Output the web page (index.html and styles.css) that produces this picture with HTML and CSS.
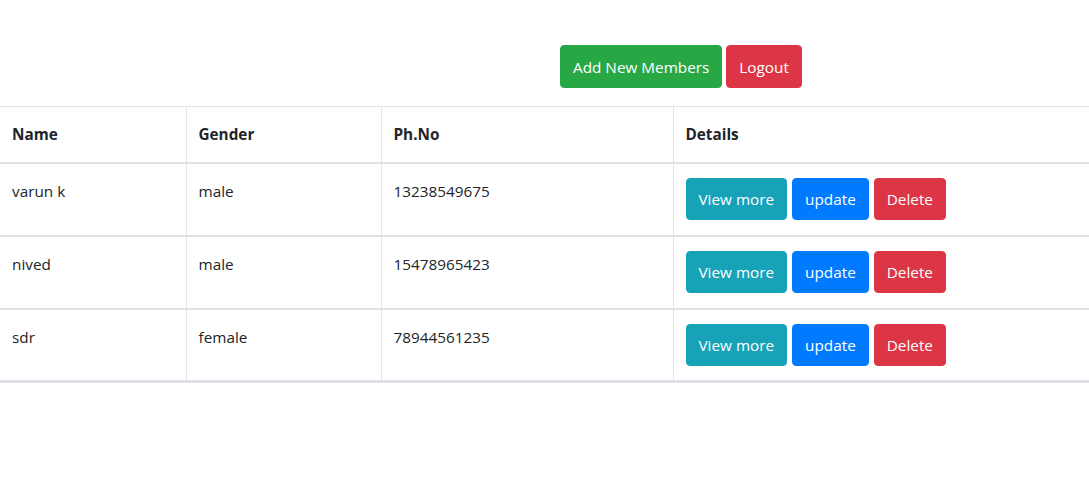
FILE: index.html
```html
<!DOCTYPE html>
<html>
<head>
<meta charset="utf-8">
<link rel="stylesheet" href="styles.css">
</head>
<body>
<div class="page">
  <div class="topbar">
    <button class="btn btn-success">Add New Members</button>
    <button class="btn btn-danger">Logout</button>
  </div>
  <table class="members">
    <thead>
      <tr>
        <th class="c-name">Name</th>
        <th class="c-gender">Gender</th>
        <th class="c-phone">Ph.No</th>
        <th class="c-details">Details</th>
      </tr>
    </thead>
    <tbody>
      <tr>
        <td>varun k</td>
        <td>male</td>
        <td>13238549675</td>
        <td><div class="actions"><button class="btn btn-info">View more</button><button class="btn btn-primary">update</button><button class="btn btn-danger">Delete</button></div></td>
      </tr>
      <tr>
        <td>nived</td>
        <td>male</td>
        <td>15478965423</td>
        <td><div class="actions"><button class="btn btn-info">View more</button><button class="btn btn-primary">update</button><button class="btn btn-danger">Delete</button></div></td>
      </tr>
      <tr>
        <td>sdr</td>
        <td>female</td>
        <td>78944561235</td>
        <td><div class="actions"><button class="btn btn-info">View more</button><button class="btn btn-primary">update</button><button class="btn btn-danger">Delete</button></div></td>
      </tr>
    </tbody>
  </table>
</div>
</body>
</html>
```
FILE: styles.css
```css
* { box-sizing: border-box; }
html, body { margin: 0; padding: 0; background: #fff; }
body {
  font-family: "Open Sans", "Noto Sans", sans-serif;
  font-size: 15.3px;
  line-height: 1.5;
  color: #212529;
}
.page { padding-top: 45px; }
.topbar {
  display: flex;
  gap: 4px;
  padding-left: 560px;
  margin-bottom: 18px;
}
.btn {
  display: inline-flex;
  align-items: center;
  justify-content: center;
  height: 43px;
  padding: 0 12px;
  border: 1px solid transparent;
  border-radius: 4px;
  font-family: inherit;
  font-size: 15.3px;
  color: #fff;
  cursor: pointer;
}
.btn-success { background: #28a745; border-color: #28a745; }
.btn-danger { background: #dc3545; border-color: #dc3545; }
.btn-info { background: #17a2b8; border-color: #17a2b8; }
.btn-primary { background: #007bff; border-color: #007bff; }

.members {
  width: 100%;
  border-collapse: collapse;
}
.members th, .members td {
  text-align: left;
  vertical-align: top;
  padding: 16px 12px 12px;
  border-left: 1px solid #e3e4e8;
}
.members th:first-child, .members td:first-child { border-left: none; }
.members th {
  font-weight: 700;
  border-top: 1px solid #e3e4e8;
  border-bottom: 2px solid #dee2e6;
  height: 56px;
}
.members td {
  border-bottom: 2px solid #dee2e6;
  height: 73px;
}
.members tbody tr:last-child td { border-bottom-width: 3px; }
.c-name { width: 186px; }
.c-gender { width: 195px; }
.c-phone { width: 292px; }
.actions {
  display: flex;
  gap: 5px;
  margin-top: -2px;
}
.actions .btn { height: 42px; }
```
